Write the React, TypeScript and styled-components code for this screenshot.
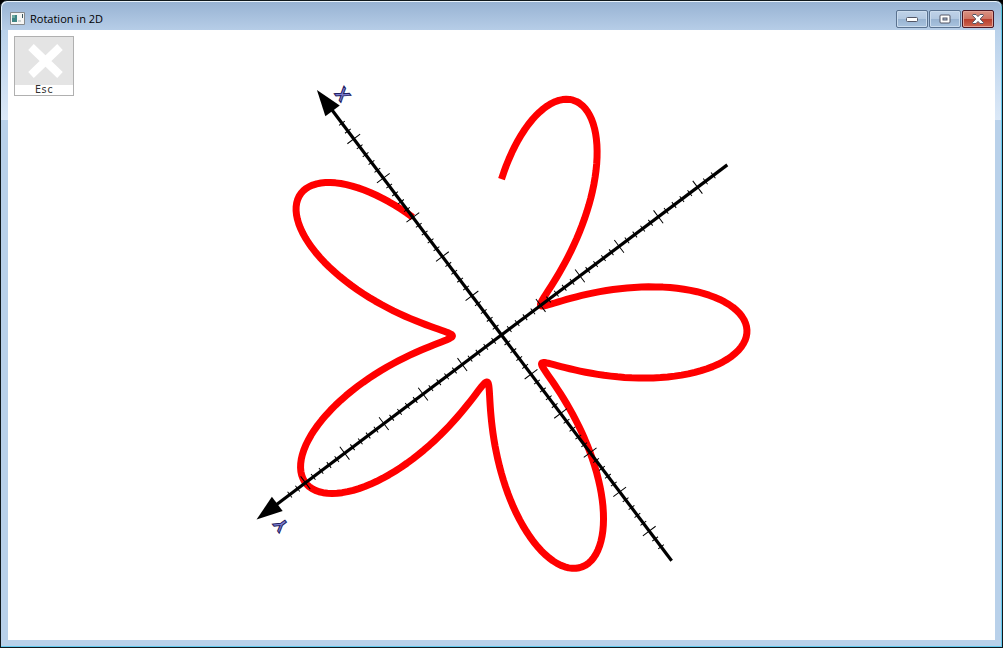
import React from 'react';
import styled, { createGlobalStyle } from 'styled-components';

const GlobalStyle = createGlobalStyle`
  * { box-sizing: border-box; }
  html, body { margin: 0; background: #000; }
`;

const Window = styled.div`
  display: flex;
  flex-direction: column;
  height: 100vh;
  border: 1px solid #10181c;
  border-radius: 7px 7px 0 0;
  background: #b9d1ea;
  box-shadow: inset 1px 1px 0 #e9f3fb, inset -1px -1px 0 #4fc3dc;
  overflow: hidden;
  font-family: 'Open Sans', 'Noto Sans', sans-serif;
`;

const TitleBar = styled.header`
  display: flex;
  align-items: center;
  flex: none;
  gap: 5px;
  height: 28px;
  padding: 5px 9px 0 8px;
  margin: 1px 1px 0;
  border-radius: 6px 6px 0 0;
  background: linear-gradient(#98b3d3, #b6cde7);
`;

const Title = styled.h1`
  flex: 1;
  margin: 0;
  font-size: 11px;
  line-height: 16px;
  font-weight: 400;
  color: #000;
`;

const Controls = styled.div`
  display: flex;
  gap: 1px;
  margin-right: -2px;
`;

const ControlButton = styled.button<{ $danger?: boolean }>`
  display: flex;
  align-items: center;
  justify-content: center;
  width: 32px;
  height: 18px;
  padding: 0;
  border: 1px solid ${(p) => (p.$danger ? '#4c1622' : '#5a7290')};
  border-radius: 2px;
  box-shadow: inset 0 0 0 1px ${(p) => (p.$danger ? '#e3a296' : '#cbdcee')};
  background: ${(p) =>
    p.$danger
      ? 'linear-gradient(#d99384 0, #cf7362 50%, #b83c2b 50%, #cc6650 100%)'
      : 'linear-gradient(#bfd2e8 0, #b2c8e1 50%, #98b3d1 50%, #a9c3df 100%)'};
`;

const Body = styled.div`
  display: flex;
  flex: 1;
  min-height: 0;
  padding: 0 7px 7px;
  background: linear-gradient(#b9d1ea, #dbe8f7 90px, #b9d1ea 90px);
  box-shadow: inset -1px -1px 0 #62c9ee;
`;

const Client = styled.main`
  display: flex;
  flex: 1;
  min-width: 0;
  position: relative;
  background: #fff;
`;

const EscapeButton = styled.button`
  position: absolute;
  top: 6px;
  left: 6px;
  display: flex;
  flex-direction: column;
  width: 60px;
  height: 60px;
  padding: 0;
  border: 1px solid #b0b0b0;
  background: #fff;
  font: 10px/10px 'DejaVu Sans Mono', monospace;
  color: #333;
`;

const EscapeIcon = styled.svg`
  display: block;
  width: 58px;
  height: 48px;
  background: #e4e4e4;
`;

const EscapeLabel = styled.span`
  align-self: stretch;
  text-align: center;
`;

const Plot = styled.svg`
  display: block;
  flex: 1;
  width: 100%;
  height: 100%;
  min-width: 0;
`;

const AxisName = styled.text`
  font: 700 18px 'Liberation Sans', sans-serif;
  text-anchor: middle;
`;

const UNIT = 49.15;
const ROTATION = (127 * Math.PI) / 180;
const SWEEP = (323 * Math.PI) / 180;

// Five-petal rose r = 3 + 2 sin 5t, seen in the rotated frame.
const rosePath = Array.from({ length: 401 }, (_, i) => {
  const t = (SWEEP * i) / 400;
  const r = UNIT * (3 + 2 * Math.sin(5 * t));
  const x = r * Math.cos(t + ROTATION);
  const y = -r * Math.sin(t + ROTATION);
  return `${i ? 'L' : 'M'}${x.toFixed(2)} ${y.toFixed(2)}`;
}).join('');

const tickPath = Array.from({ length: 55 }, (_, i) => i - 27)
  .filter((n) => n !== 0)
  .map((n) => {
    const half = n % 5 === 0 ? 8 : 3.6;
    return `M${((n * UNIT) / 5).toFixed(2)} ${-half}V${half}`;
  })
  .join('');

function Axis({ angle }: { angle: number }) {
  return (
    <g transform={`rotate(${angle})`}>
      <path d="M-283 0H286" stroke="#000" strokeWidth="3.2" />
      <path d={tickPath} stroke="#000" strokeWidth="1" />
      <path d="M307 0L281 -9V9Z" fill="#000" />
    </g>
  );
}

function Label({ x, y, children }: { x: number; y: number; children: string }) {
  return (
    <g transform={`translate(${x} ${y}) rotate(-127)`}>
      <AxisName y="6" fill="#7f80d4" stroke="#202060" strokeWidth="1">
        {children}
      </AxisName>
    </g>
  );
}

export default function App() {
  return (
    <>
      <GlobalStyle />
      <Window>
        <TitleBar>
          <svg width="15" height="13" viewBox="0 0 15 13" aria-hidden="true">
            <path d="M.5 .5H14.5V12.5H.5Z" fill="#f6f6f4" stroke="#85898c" />
            <path d="M2 3H7V10H2Z" fill="#3f8585" />
            <path d="M2 3H5V6H2Z" fill="#6fa9a0" />
            <path d="M8 8H11V10H8Z" fill="#cdd3d3" />
            <path d="M12.5 2V6" stroke="#3d5660" />
          </svg>
          <Title>Rotation in 2D</Title>
          <Controls>
            <ControlButton aria-label="Minimize">
              <svg width="12" height="6" viewBox="0 0 12 6">
                <rect x=".5" y="1.5" width="11" height="4" rx="1" fill="#fff" stroke="#535666" />
              </svg>
            </ControlButton>
            <ControlButton aria-label="Maximize">
              <svg width="12" height="10" viewBox="0 0 12 10">
                <rect x="1" y="1" width="10" height="8" rx="1" fill="#fff" stroke="#535666" />
                <rect x="4" y="4" width="4" height="2" fill="#a9bfd9" stroke="#535666" />
              </svg>
            </ControlButton>
            <ControlButton $danger aria-label="Close">
              <svg width="12" height="10" viewBox="0 0 12 10">
                <path
                  d="M1 .5H4L6 2.6L8 .5H11L11.5 1.5L8.2 5L11.5 8.5L11 9.5H8L6 7.4L4 9.5H1L.5 8.5L3.8 5L.5 1.5Z"
                  fill="#fff"
                  stroke="#535666"
                />
              </svg>
            </ControlButton>
          </Controls>
        </TitleBar>
        <Body>
          <Client>
            <Plot viewBox="-494 -305 988 610" role="img" aria-label="Rotated rose curve">
              <path d={rosePath} fill="none" stroke="#f00" strokeWidth="7" strokeLinejoin="round" />
              <Axis angle={-127} />
              <Axis angle={143} />
              <Label x={-159} y={-241}>X</Label>
              <Label x={-221} y={190}>Y</Label>
            </Plot>
            <EscapeButton>
              <EscapeIcon viewBox="0 0 58 48" aria-hidden="true">
                <path d="M16 10L45 38M45 10L16 38" stroke="#fff" strokeWidth="8" />
              </EscapeIcon>
              <EscapeLabel>Esc</EscapeLabel>
            </EscapeButton>
          </Client>
        </Body>
      </Window>
    </>
  );
}
